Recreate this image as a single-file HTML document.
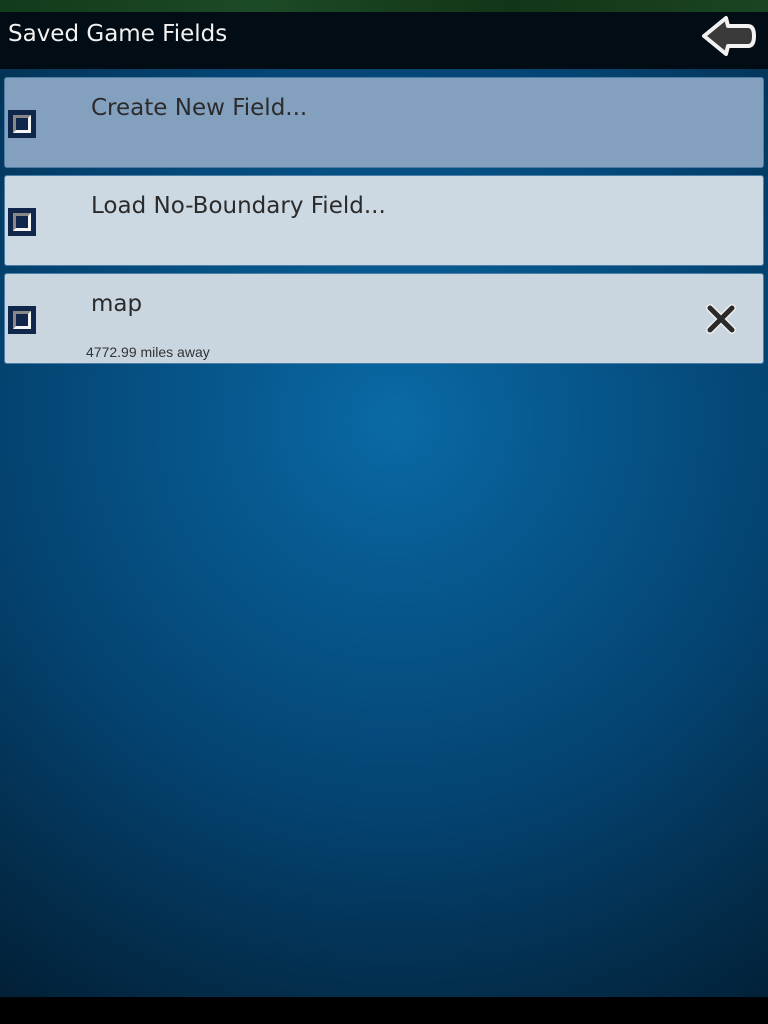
<!DOCTYPE html>
<html><head><style>
*{margin:0;padding:0;box-sizing:border-box}
body{width:768px;height:1024px;overflow:hidden;position:relative;font-family:"DejaVu Sans","Liberation Sans",sans-serif;
background:radial-gradient(circle at 395px 420px,#0a6aa6 0px,#075a90 150px,#044473 380px,#032b48 600px,#021a2e 750px);}
.top{position:absolute;left:0;top:0;width:768px;height:12px;background:linear-gradient(90deg,#123a1c,#1d4a26,#113518,#1b4522);}
.bar{position:absolute;left:0;top:12px;width:768px;height:57px;background:#020c14;}
.bar h1{position:absolute;left:8px;top:9px;font-size:23px;font-weight:normal;color:#f2f2f2;}
.row{position:absolute;left:4px;width:760px;height:91px;border-radius:3px;border:1px solid #4d7ea8;}
.row .t{position:absolute;left:86px;top:17px;font-size:23px;color:#2b2b2b;}
.ic{position:absolute;left:3px;top:32px;width:28px;height:28px;background:#10264a;}
.ic i{position:absolute;left:5px;top:5px;width:18px;height:18px;border:3px solid #f4f4f4;border-left-color:#888;border-top-color:#888;background:#10264a;}
.bot{position:absolute;left:0;top:997px;width:768px;height:27px;background:#000;}
</style></head><body>
<div class="top"></div>
<div class="bar"><h1>Saved Game Fields</h1>
<svg style="position:absolute;left:700px;top:0px" width="58" height="48" viewBox="0 0 58 48"><path d="M4 24 L26 6 L28 14 L48 14 Q54 14 54 24 Q54 34 48 34 L28 34 L26 42 Z" fill="#3a3a3a" stroke="#f2f2f2" stroke-width="4" stroke-linejoin="round"/></svg>
</div>
<div class="row" style="top:77px;background:#84a0bf"><div class="ic"><i></i></div><div class="t">Create New Field...</div></div>
<div class="row" style="top:175px;background:#ccd9e2"><div class="ic"><i></i></div><div class="t">Load No-Boundary Field...</div></div>
<div class="row" style="top:273px;background:#c9d6e0"><div class="ic"><i></i></div><div class="t">map</div>
<div style="position:absolute;left:81px;top:70px;font-size:14px;color:#333;font-family:'Liberation Sans',sans-serif">4772.99 miles away</div>
<svg style="position:absolute;left:700px;top:29px" width="32" height="32" viewBox="0 0 32 32"><path d="M5 5 L27 27 M27 5 L5 27" stroke="#eee" stroke-width="8" stroke-linecap="round"/><path d="M5 5 L27 27 M27 5 L5 27" stroke="#2a2a2a" stroke-width="5" stroke-linecap="round"/></svg>
</div>
<div class="bot"></div>
</body></html>
